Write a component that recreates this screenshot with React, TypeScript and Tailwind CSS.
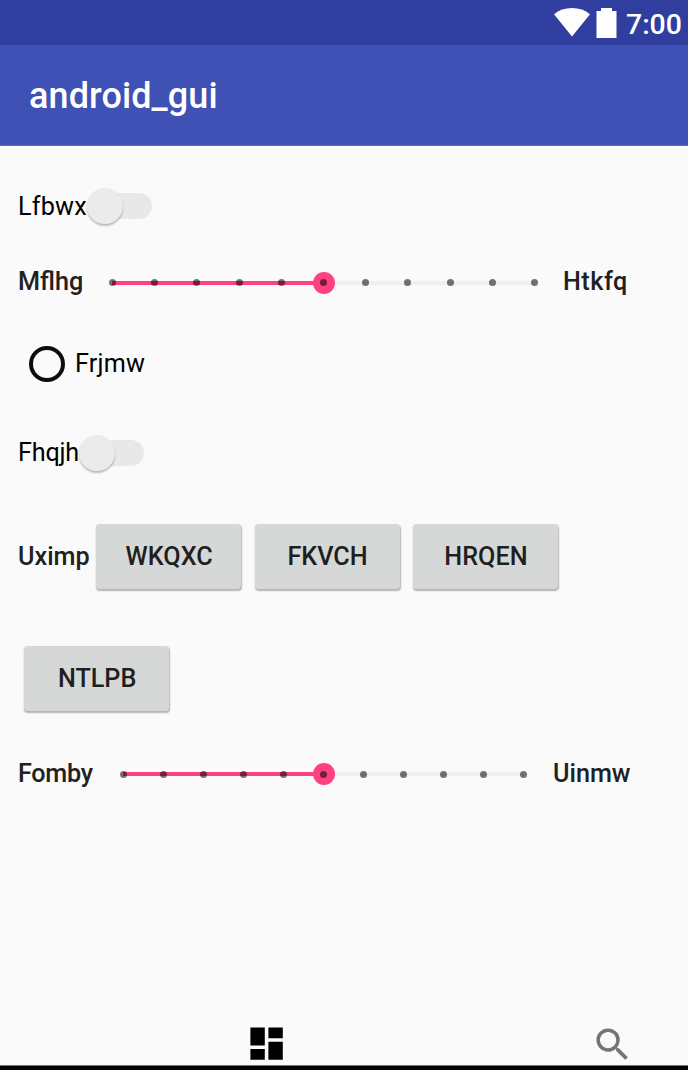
import type { ReactNode } from "react";

function Label({ children, className = "" }: { children: ReactNode; className?: string }) {
  return (
    <span className={`shrink-0 whitespace-nowrap text-[25.2px] leading-[30px] ${className}`}>{children}</span>
  );
}

function Toggle({ className = "" }: { className?: string }) {
  return (
    <div className={`relative h-[37px] w-[65px] shrink-0 ${className}`}>
      <div className="absolute right-0 top-[5px] h-[26px] w-[58px] rounded-full bg-[#e8e8e8]" />
      <div className="absolute left-0 top-0 size-[36px] rounded-full bg-[#ebebeb] shadow-[0_2px_2px_rgba(0,0,0,0.25)]" />
    </div>
  );
}

function Slider({ className = "" }: { className?: string }) {
  return (
    <div className={`relative flex h-[22px] shrink-0 items-center justify-between ${className}`}>
      <div className="absolute left-[3px] right-[3px] top-[9px] h-[4px] bg-[#f0f0f0]" />
      <div className="absolute left-[3px] right-1/2 top-[9px] h-[4px] bg-[#ff4081]" />
      <div className="absolute left-1/2 top-0 -ml-[11px] size-[22px] rounded-full bg-[#ff4081]" />
      {Array.from({ length: 11 }, (_, i) => (
        <div key={i} className="relative size-[7px] rounded-full bg-black/54" />
      ))}
    </div>
  );
}

function Button({ children }: { children: ReactNode }) {
  return (
    <button className="h-[65px] w-[145px] shrink-0 rounded-[4px] bg-[#d6d8d7] pl-[0.5px] pt-[1px] text-[25.2px] font-medium leading-[30px] text-[#1e1f1f] shadow-[0.5px_1.5px_1.5px_rgba(0,0,0,0.28)]">
      {children}
    </button>
  );
}

export default function App() {
  return (
    <div className="flex h-[1070px] w-[688px] flex-col overflow-hidden bg-[#fafafa] font-[Roboto,sans-serif]">
      <div className="flex h-[45px] shrink-0 bg-[#303f9f] pl-[554px] text-white">
        <svg className="mt-[8px] h-[29px] w-[36px] shrink-0" viewBox="0 0 36 29" fill="currentColor">
          <path d="M0 6.3C5 2.2 11 0 18 0s13 2.2 18 6.3L18 28.5z" />
        </svg>
        <svg className="ml-[6px] mt-[8px] h-[30px] w-[21px] shrink-0" viewBox="0 0 21 30" fill="currentColor">
          <path d="M5 0h11v3h4.5v27H.5V3H5z" />
        </svg>
        <span className="ml-[9px] mt-[8px] text-[28.4px] font-medium leading-[34px]">7:00</span>
      </div>
      <header className="flex h-[101px] shrink-0 items-center border-b border-[#5c6bc0] bg-[#3f51b5] pl-[29px] pt-[2px]">
        <h1 className="text-[36px] font-medium leading-[42px] tracking-[0.1px] text-white">android_gui</h1>
      </header>
      <main className="flex grow flex-col pl-[18px] text-[#212121]">
        <div className="flex h-[120px] items-center">
          <Label className="w-[69px] pt-[1px] tracking-[0.2px] text-black">Lfbwx</Label>
          <Toggle />
        </div>
        <div className="flex h-[33px] items-center">
          <Label className="w-[91px] pb-[2px] font-medium">Mflhg</Label>
          <Slider className="w-[429px]" />
          <Label className="ml-[25px] pb-[2px] font-medium tracking-[0.5px]">Htkfq</Label>
        </div>
        <div className="flex h-[130px] items-center pl-[11px]">
          <div className="size-[36px] shrink-0 rounded-full border-[4px] border-[#0d0d0d]" />
          <Label className="ml-[10px] pb-[1px] tracking-[0.2px] text-black">Frjmw</Label>
        </div>
        <div className="flex h-[48px] items-center">
          <Label className="w-[61px] tracking-[-0.2px] text-black">Fhqjh</Label>
          <Toggle />
        </div>
        <div className="flex h-[160px] items-center">
          <Label className="w-[78.4px] pb-[1px] font-medium">Uximp</Label>
          <div className="flex gap-[13.4px] pb-[2px]">
            <Button>WKQXC</Button>
            <Button>FKVCH</Button>
            <Button>HRQEN</Button>
          </div>
        </div>
        <div className="flex h-[84px] items-center pb-[2px] pl-[6.4px]">
          <Button>NTLPB</Button>
        </div>
        <div className="flex h-[106px] items-center">
          <Label className="w-[102px] pb-[1px] font-medium tracking-[-0.3px]">Fomby</Label>
          <Slider className="w-[407px]" />
          <Label className="ml-[26px] pb-[1px] font-medium">Uinmw</Label>
        </div>
      </main>
      <nav className="flex h-[43px] shrink-0 pl-[244.6px]">
        <svg className="mt-[0.4px] size-[43.2px] shrink-0" viewBox="0 0 24 24" fill="#000">
          <path d="M3 13h8V3H3v10zm0 8h8v-6H3v6zm10 0h8V11h-8v10zm0-18v6h8V3h-8z" />
        </svg>
        <svg className="ml-[302.8px] mt-[0.8px] size-[43.2px] shrink-0" viewBox="0 0 24 24" fill="#757575">
          <path d="M15.5 14h-.79l-.28-.27A6.471 6.471 0 0 0 16 9.5 6.5 6.5 0 1 0 9.5 16c1.61 0 3.09-.59 4.23-1.57l.27.28v.79l5 4.99L20.49 19l-4.99-5zm-6 0C7.01 14 5 11.99 5 9.5S7.01 5 9.5 5 14 7.01 14 9.5 11.99 14 9.5 14z" />
        </svg>
      </nav>
      <div className="h-[5px] shrink-0 border-t border-[#777] bg-black" />
    </div>
  );
}
